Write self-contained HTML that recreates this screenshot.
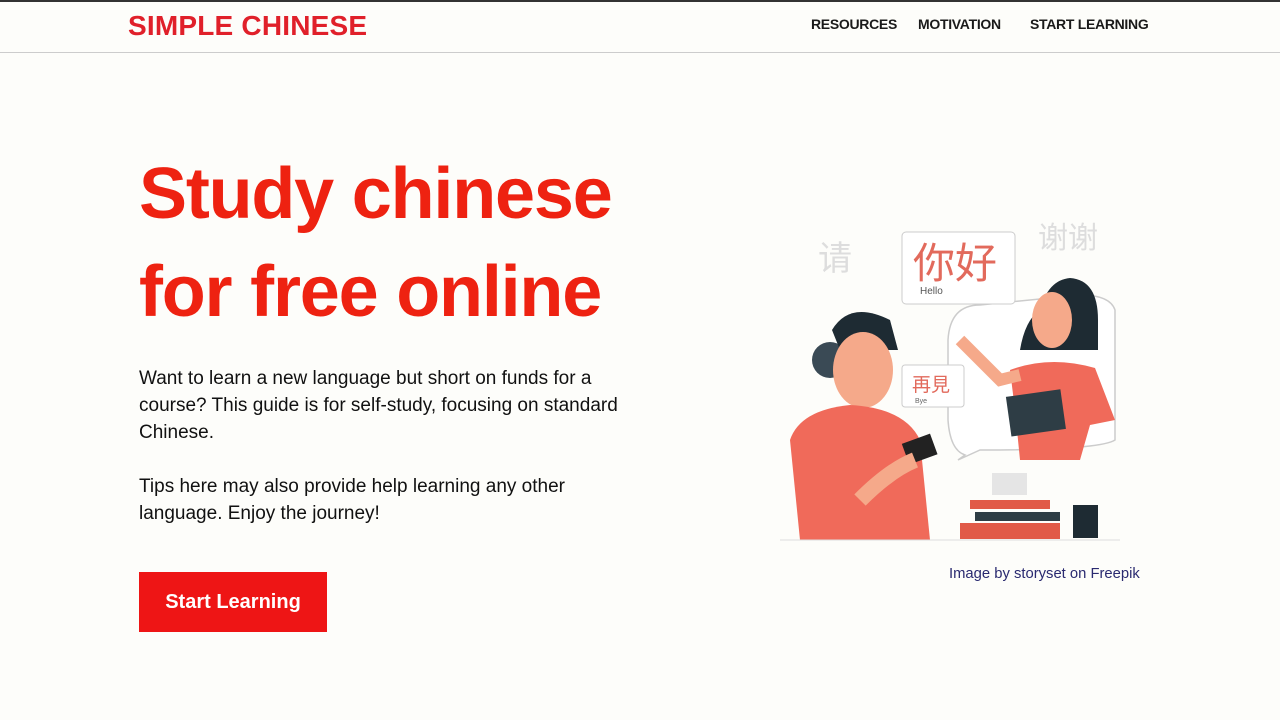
<!DOCTYPE html>
<html><head><meta charset="utf-8"><style>
*{margin:0;padding:0;box-sizing:border-box}
body{width:1280px;height:720px;background:#fdfdfa;font-family:"Liberation Sans",sans-serif;position:relative;overflow:hidden;color:#111}
.top{position:absolute;left:0;top:0;width:1280px;height:2px;background:#333}
.hdr{position:absolute;left:0;top:2px;width:1280px;height:51px;border-bottom:1px solid #ccc}
.logo{position:absolute;left:128px;top:8px;font-size:28px;font-weight:bold;color:#e0202a;letter-spacing:0.2px}
.nav{position:absolute;top:14px;font-size:14px;font-weight:bold;color:#1a1a1a;letter-spacing:-0.3px}
h1{position:absolute;left:139px;top:145px;font-size:72px;line-height:98px;color:#ee2211;font-weight:bold;letter-spacing:-1.2px}
.p{position:absolute;left:139px;font-size:19px;line-height:27px;color:#111;white-space:nowrap}
.btn{position:absolute;left:139px;top:572px;width:188px;height:60px;background:#ee1515;color:#fff;font-size:20px;font-weight:bold;text-align:center;line-height:60px}
.cap{position:absolute;left:949px;top:566px;font-size:14.8px;color:#2a2a70}
</style></head><body>
<div class="top"></div>
<div class="hdr">
<div class="logo">SIMPLE CHINESE</div>
<div class="nav" style="left:811px">RESOURCES</div>
<div class="nav" style="left:918px">MOTIVATION</div>
<div class="nav" style="left:1030px">START LEARNING</div>
</div>
<h1>Study chinese<br>for free online</h1>
<div class="p" style="top:365px">Want to learn a new language but short on funds for a<br>course? This guide is for self-study, focusing on standard<br>Chinese.</div>
<div class="p" style="top:473px">Tips here may also provide help learning any other<br>language. Enjoy the journey!</div>
<div class="btn">Start Learning</div>
<svg style="position:absolute;left:780px;top:210px" width="360" height="340" viewBox="0 0 360 340">
<text x="38" y="60" font-size="34" fill="#ddd" font-family="Noto Sans CJK SC">请</text>
<text x="258" y="38" font-size="30" fill="#ddd" font-family="Noto Sans CJK SC">谢谢</text>
<path d="M200 95 Q170 95 168 130 L168 210 Q170 240 185 245 L178 250 L200 240 Q320 240 335 230 L335 100 Q330 85 300 85 Z" fill="#fff" stroke="#ccc" stroke-width="1.5"/>
<rect x="122" y="22" width="113" height="72" rx="4" fill="#fff" stroke="#ccc"/>
<text x="133" y="68" font-size="42" fill="#e26a5c" font-family="Noto Sans CJK SC">你好</text>
<text x="140" y="84" font-size="10" fill="#555">Hello</text>
<path d="M260 100 Q268 70 290 68 Q318 70 318 110 L318 140 L240 140 Q245 110 260 100Z" fill="#1e2b33"/>
<ellipse cx="272" cy="110" rx="20" ry="28" fill="#f5a98a"/>
<path d="M230 160 Q270 145 315 158 L335 210 L310 215 L300 250 L240 250 L235 200Z" fill="#f06a5a"/>
<path d="M180 130 Q200 150 220 170 L240 165" stroke="#f5a98a" stroke-width="12" fill="none"/>
<rect x="228" y="183" width="55" height="40" fill="#2e3d45" transform="rotate(-8 255 200)"/>
<rect x="122" y="155" width="62" height="42" rx="3" fill="#fff" stroke="#ccc"/>
<text x="132" y="181" font-size="19" fill="#e26a5c" font-family="Noto Sans CJK SC">再見</text>
<text x="135" y="193" font-size="7" fill="#666">Bye</text>
<circle cx="50" cy="150" r="18" fill="#3a4a55"/>
<path d="M52 120 Q70 90 110 110 L118 140 L60 140Z" fill="#1e2b33"/>
<ellipse cx="83" cy="160" rx="30" ry="38" fill="#f5a98a"/>
<path d="M10 230 Q20 200 70 195 Q125 198 140 230 L150 330 L20 330Z" fill="#f06a5a"/>
<rect x="125" y="228" width="30" height="22" fill="#222" transform="rotate(-20 140 240)"/>
<path d="M80 290 Q110 260 135 250" stroke="#f5a98a" stroke-width="16" fill="none"/>
<rect x="212" y="263" width="35" height="22" fill="#e5e5e5"/>
<rect x="190" y="290" width="80" height="9" fill="#e15a48"/>
<rect x="195" y="302" width="85" height="9" fill="#2e3d45"/>
<rect x="180" y="313" width="100" height="16" fill="#e15a48"/>
<rect x="293" y="295" width="25" height="33" fill="#1e2b33"/>
<line x1="0" y1="330" x2="340" y2="330" stroke="#ddd"/>
</svg>
<div class="cap">Image by storyset on Freepik</div>
</body></html>
